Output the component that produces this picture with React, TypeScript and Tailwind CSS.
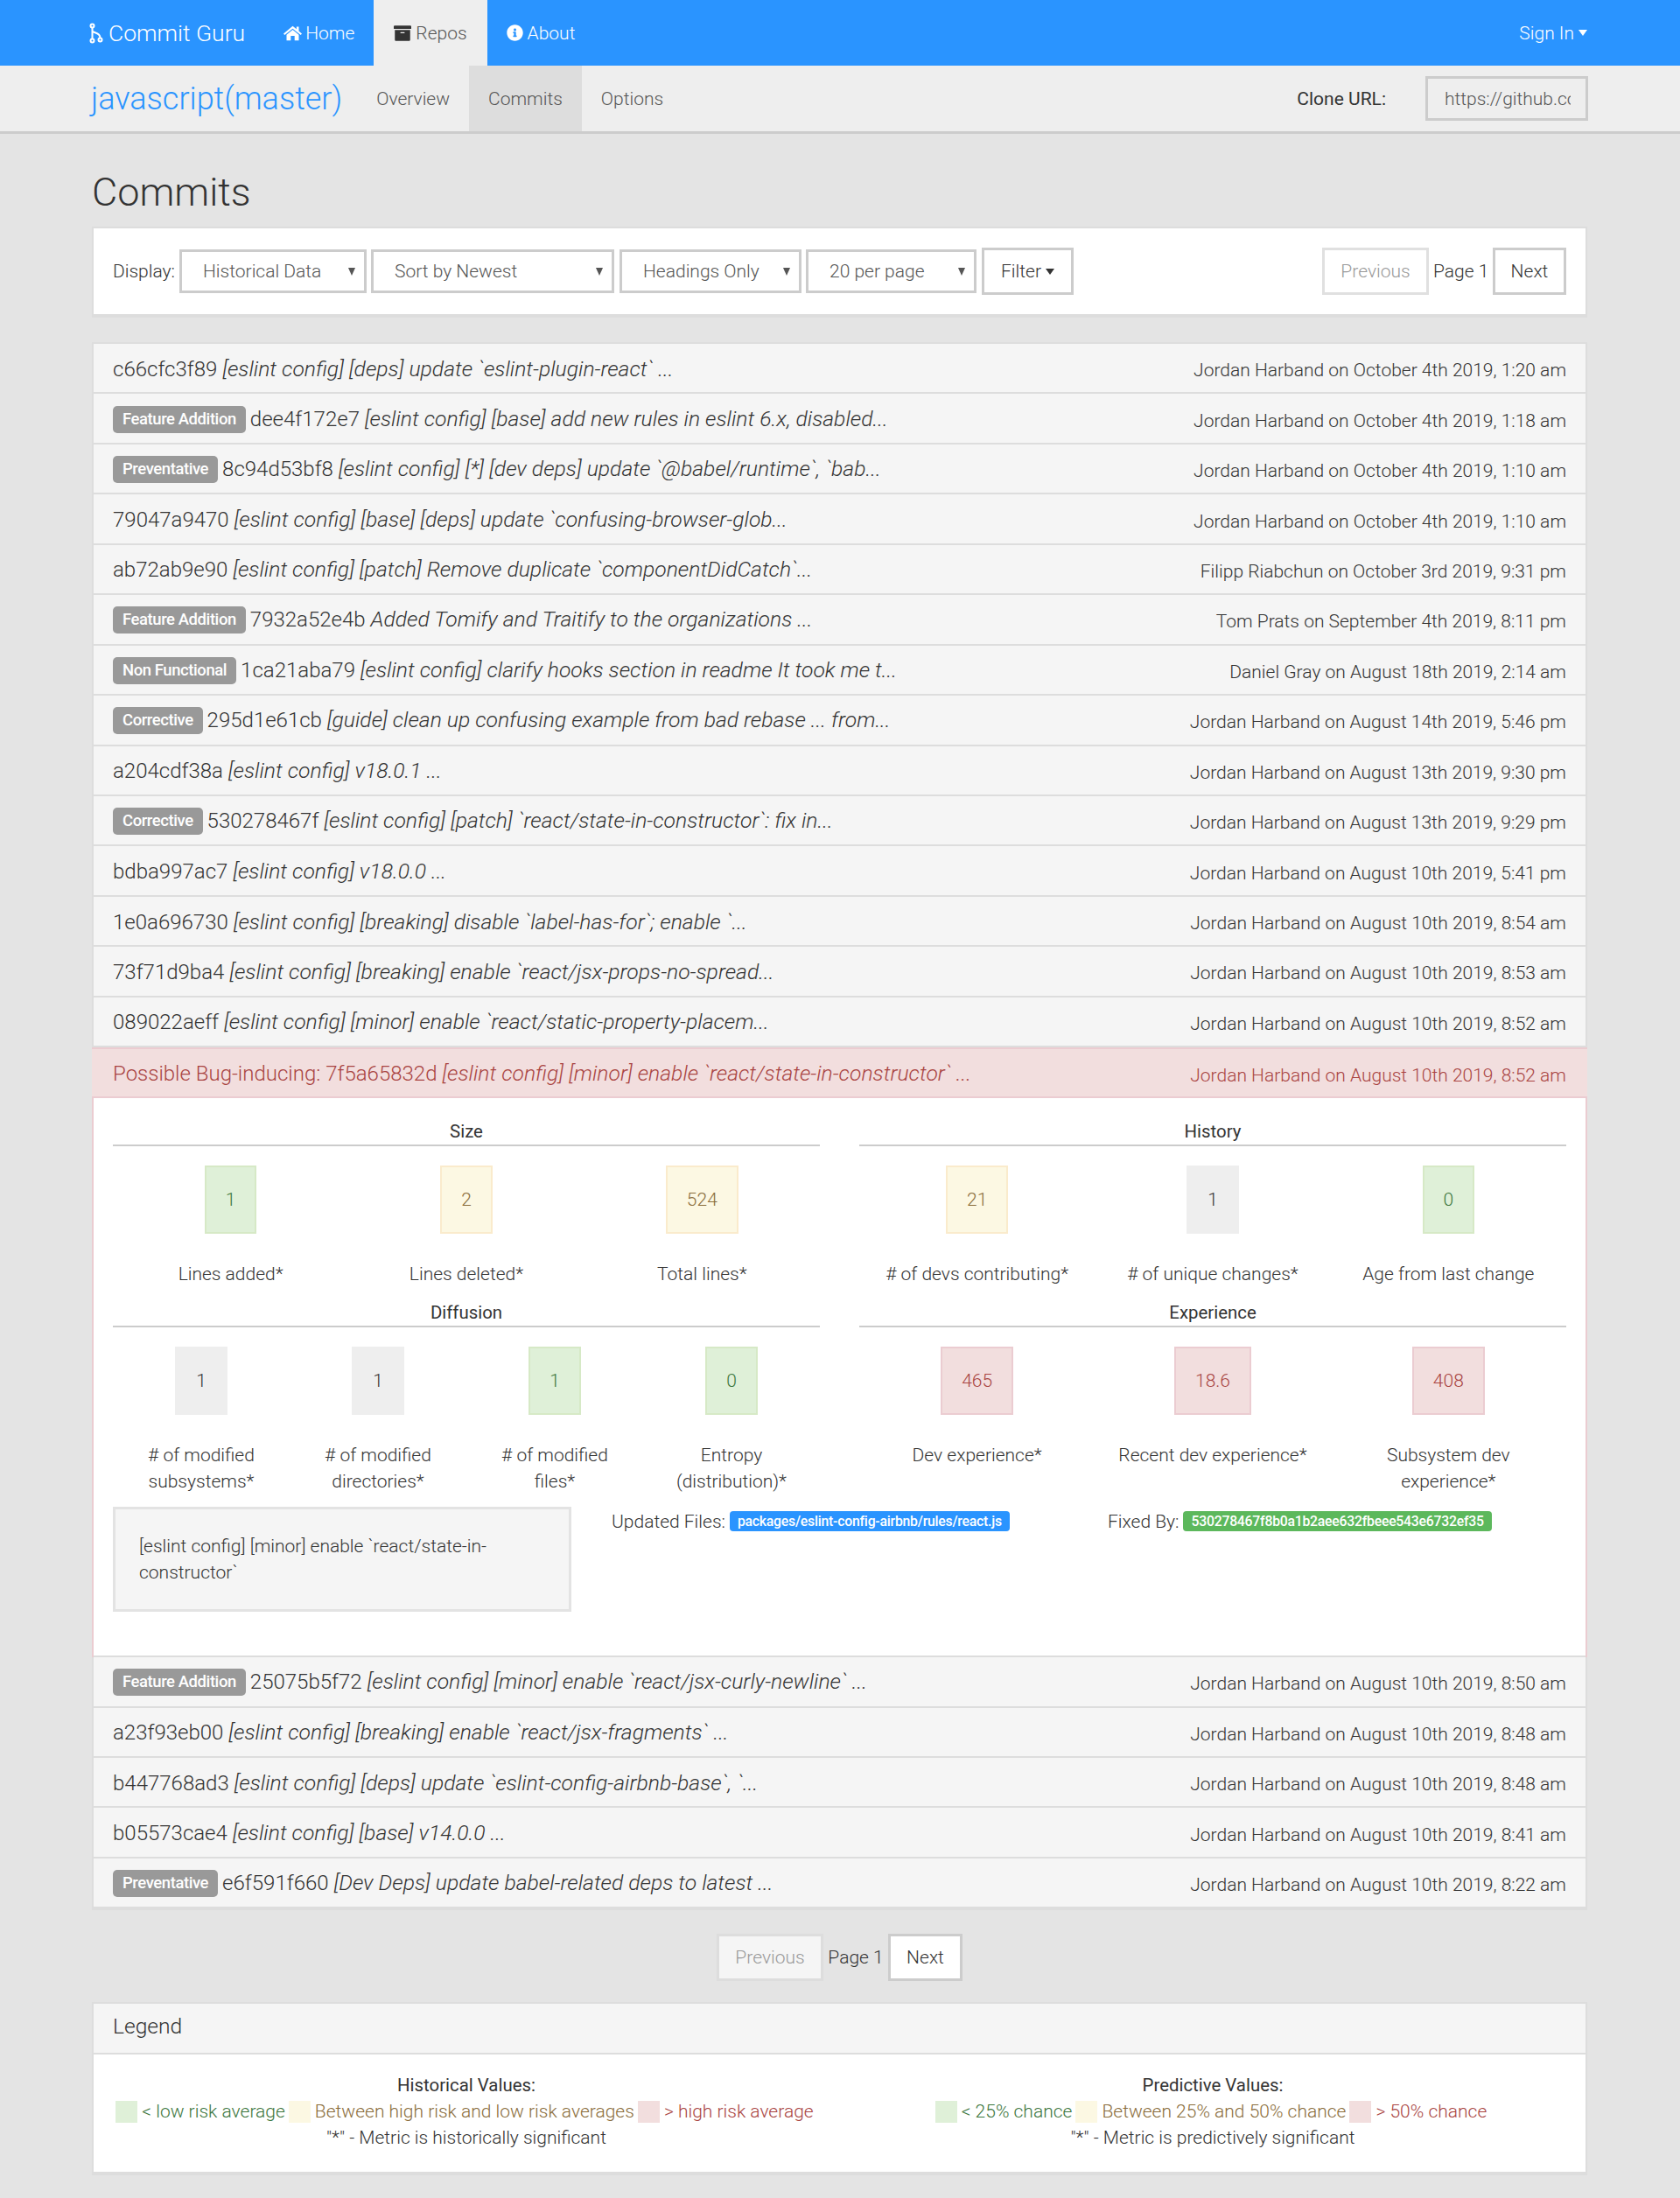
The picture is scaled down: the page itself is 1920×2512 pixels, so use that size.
import { FaArchive, FaInfoCircle } from 'react-icons/fa';

type Tone = 'success' | 'warning' | 'danger' | 'none';

const toneClass: Record<Tone, string> = {
  success: 'bg-[#dff0d8] border-[#d6e9c6] text-[#3c763d]',
  warning: 'bg-[#fcf8e3] border-[#faebcc] text-[#8a6d3b]',
  danger: 'bg-[#f2dede] border-[#ebccd1] text-[#a94442]',
  none: 'bg-[#eeeeee] border-[#eeeeee] text-[#333333]'
};

const legendText: Record<Tone, string> = {
  success: 'text-[#3c763d]',
  warning: 'text-[#8a6d3b]',
  danger: 'text-[#a94442]',
  none: 'text-[#333333]'
};

interface Commit {
  label?: string;
  hash: string;
  msg: string;
  meta: string;
}

const topCommits: Commit[] = [
  { hash: 'c66cfc3f89', msg: '[eslint config] [deps] update `eslint-plugin-react` ...', meta: 'Jordan Harband on October 4th 2019, 1:20 am' },
  { label: 'Feature Addition', hash: 'dee4f172e7', msg: '[eslint config] [base] add new rules in eslint 6.x, disabled...', meta: 'Jordan Harband on October 4th 2019, 1:18 am' },
  { label: 'Preventative', hash: '8c94d53bf8', msg: '[eslint config] [*] [dev deps] update `@babel/runtime`, `bab...', meta: 'Jordan Harband on October 4th 2019, 1:10 am' },
  { hash: '79047a9470', msg: '[eslint config] [base] [deps] update `confusing-browser-glob...', meta: 'Jordan Harband on October 4th 2019, 1:10 am' },
  { hash: 'ab72ab9e90', msg: '[eslint config] [patch] Remove duplicate `componentDidCatch`...', meta: 'Filipp Riabchun on October 3rd 2019, 9:31 pm' },
  { label: 'Feature Addition', hash: '7932a52e4b', msg: 'Added Tomify and Traitify to the organizations ...', meta: 'Tom Prats on September 4th 2019, 8:11 pm' },
  { label: 'Non Functional', hash: '1ca21aba79', msg: '[eslint config] clarify hooks section in readme It took me t...', meta: 'Daniel Gray on August 18th 2019, 2:14 am' },
  { label: 'Corrective', hash: '295d1e61cb', msg: '[guide] clean up confusing example from bad rebase ... from...', meta: 'Jordan Harband on August 14th 2019, 5:46 pm' },
  { hash: 'a204cdf38a', msg: '[eslint config] v18.0.1 ...', meta: 'Jordan Harband on August 13th 2019, 9:30 pm' },
  { label: 'Corrective', hash: '530278467f', msg: '[eslint config] [patch] `react/state-in-constructor`: fix in...', meta: 'Jordan Harband on August 13th 2019, 9:29 pm' },
  { hash: 'bdba997ac7', msg: '[eslint config] v18.0.0 ...', meta: 'Jordan Harband on August 10th 2019, 5:41 pm' },
  { hash: '1e0a696730', msg: '[eslint config] [breaking] disable `label-has-for`; enable `...', meta: 'Jordan Harband on August 10th 2019, 8:54 am' },
  { hash: '73f71d9ba4', msg: '[eslint config] [breaking] enable `react/jsx-props-no-spread...', meta: 'Jordan Harband on August 10th 2019, 8:53 am' },
  { hash: '089022aeff', msg: '[eslint config] [minor] enable `react/static-property-placem...', meta: 'Jordan Harband on August 10th 2019, 8:52 am' }
];

const bottomCommits: Commit[] = [
  { label: 'Feature Addition', hash: '25075b5f72', msg: '[eslint config] [minor] enable `react/jsx-curly-newline` ...', meta: 'Jordan Harband on August 10th 2019, 8:50 am' },
  { hash: 'a23f93eb00', msg: '[eslint config] [breaking] enable `react/jsx-fragments` ...', meta: 'Jordan Harband on August 10th 2019, 8:48 am' },
  { hash: 'b447768ad3', msg: '[eslint config] [deps] update `eslint-config-airbnb-base`, `...', meta: 'Jordan Harband on August 10th 2019, 8:48 am' },
  { hash: 'b05573cae4', msg: '[eslint config] [base] v14.0.0 ...', meta: 'Jordan Harband on August 10th 2019, 8:41 am' },
  { label: 'Preventative', hash: 'e6f591f660', msg: '[Dev Deps] update babel-related deps to latest ...', meta: 'Jordan Harband on August 10th 2019, 8:22 am' }
];

const Caret = () => (
  <span className="inline-block ml-[5px] align-middle w-0 h-0 border-x-[5.5px] border-x-transparent border-t-[7px] border-t-current" />
);

const BrandIcon = () => (
  <svg width="16" height="24" viewBox="0 0 16 24" fill="none" stroke="white" strokeWidth="2" className="mr-[6px]">
    <circle cx="3.5" cy="3.5" r="2" />
    <circle cx="3.5" cy="20.5" r="2" />
    <circle cx="12.5" cy="19.5" r="2" />
    <path d="M3.5 5.5V18.5M3.5 9.5C5 12 12.5 10.5 12.5 17.5" />
  </svg>
);

const HomeIcon = () => (
  <svg width="21" height="21" viewBox="0 0 24 24" fill="white" className="mr-[4px]">
    <path d="M12 3 0 13l1.5 1.8L12 6.5l10.5 8.3L24 13l-4-3.3V4h-3v3.2Z" />
    <path d="M4 14.5 12 8l8 6.5V22h-5.5v-6h-5v6H4Z" />
  </svg>
);

const Arrow = () => (
  <svg width="8" height="9" viewBox="0 0 8 9" className="absolute right-[13px] top-[21px] pointer-events-none">
    <path d="M0 0H8L4 9Z" fill="#555555" />
  </svg>
);

const Select = ({ text, width }: { text: string; width: string }) => (
  <div className={`relative ${width}`}>
    <select className="appearance-none w-full h-[50px] border-[3px] border-[#cccccc] bg-white pl-[24px] text-[#555555] font-light">
      <option>{text}</option>
    </select>
    <Arrow />
  </div>
);

const CommitRow = ({ commit }: { commit: Commit }) => (
  <div className="h-[57.45px] flex items-center justify-between px-[22px] bg-[#f5f5f5] border-b-2 border-[#dddddd]">
    <div className="text-[24px] pt-[2px] whitespace-nowrap">
      {commit.label && (
        <span className="inline-block align-[2px] bg-[#999999] text-white text-[18.45px] font-medium tracking-[-0.4px] rounded-[5px] px-[11px] leading-[31px] h-[31px] mr-[5px]">{commit.label}</span>
      )}
      {commit.hash} <i className="text-[24.7px]">{commit.msg}</i>
    </div>
    <div className="pt-[5px] whitespace-nowrap">{commit.meta}</div>
  </div>
);

const Metric = ({ value, label, tone }: { value: string; label: string; tone: Tone }) => (
  <div className="flex flex-col items-center text-center px-[22px]">
    <div className={`border-2 px-[22px] h-[78px] flex items-center ${toneClass[tone]}`}>{value}</div>
    <div className="mt-[31px] leading-[30px]">{label}</div>
  </div>
);

const Section = ({ title, children }: { title: string; children: React.ReactNode }) => (
  <div>
    <div className="text-center text-[20.4px] font-normal leading-[28px] border-b-2 border-[#cccccc] pb-[1px]">{title}</div>
    <div className="mt-[22px]">{children}</div>
  </div>
);

const Legend = ({ title, items, note }: { title: string; items: [string, Tone][]; note: string }) => (
  <div className="flex flex-col items-center">
    <div className="text-[20.4px] font-normal leading-[30px]">{title}</div>
    <div className="flex items-center h-[30px]">
      {items.map(([text, tone]) => (
        <div key={text} className={`flex items-center ${legendText[tone]}`}>
          <span className={`w-[25px] h-[25px] mr-[5px] ${toneClass[tone]}`} />
          <span className="mr-[4px]">{text}</span>
        </div>
      ))}
    </div>
    <div className="leading-[30px]">{note}</div>
  </div>
);

export default function App() {
  return (
    <div className="min-h-[2512px] bg-[#e4e4e4] text-[21px] font-light text-[#333333] leading-[30px] font-['Roboto',sans-serif]">
      {/* Top nav */}
      <div className="h-[75px] bg-[#2a94ff] text-white flex items-center pl-[102px] pr-[106px]">
        <div className="flex items-center text-[26.5px] mr-[21px]">
          <BrandIcon />
          Commit Guru
        </div>
        <a className="h-full flex items-center pl-[23px] pr-[22px]"><HomeIcon />Home</a>
        <a className="h-full flex items-center px-[23px] bg-[#eeeeee] text-[#555555]"><FaArchive className="mr-[5px] text-[#333333] text-[20px]" />Repos</a>
        <a className="h-full flex items-center px-[22px]"><FaInfoCircle className="mr-[5px] text-[19px]" />About</a>
        <a className="ml-auto flex items-center">Sign In<Caret /></a>
      </div>

      {/* Repo nav */}
      <div className="h-[78px] bg-[#eeeeee] border-b-[3px] border-[#cccccc] flex items-center pl-[104px] pr-[105px]">
        <div className="text-[36px] text-[#2a94ff] mr-[17px]">javascript(master)</div>
        <a className="h-full flex items-center px-[22px] text-[#555555]">Overview</a>
        <a className="h-full flex items-center px-[22px] text-[#555555] bg-[#dddddd]">Commits</a>
        <a className="h-full flex items-center px-[22px] text-[#555555]">Options</a>
        <div className="ml-auto font-normal mr-[45px]">Clone URL:</div>
        <input readOnly value="https://github.com/airbnb/javascript" className="w-[186px] h-[51px] border-[3px] border-[#cccccc] bg-[#eeeeee] pl-[19px] pr-[17px] text-[#555555] font-light" />
      </div>

      <div className="pl-[105px] pr-[106px] w-[1920px]">
        <h1 className="text-[45px] font-light leading-[50px] mt-[42px]">Commits</h1>

        {/* Filters */}
        <div className="mt-[14px] h-[104px] bg-white border-2 border-[#dddddd] border-b-[4px] flex items-center px-[22px]">
          <span className="w-[76px]">Display:</span>
          <Select text="Historical Data" width="w-[214px] mr-[5px]" />
          <Select text="Sort by Newest" width="w-[278px] mr-[6px]" />
          <Select text="Headings Only" width="w-[208px] mr-[5px]" />
          <Select text="20 per page" width="w-[195px] mr-[6px]" />
          <button className="h-[54px] w-[105px] border-[3px] border-[#cccccc] flex items-center justify-center">Filter<Caret /></button>
          <button className="ml-auto h-[54px] w-[122px] border-[3px] border-[#e0e0e0] text-[#999999]">Previous</button>
          <span className="mx-[5px] w-[63px] text-center whitespace-nowrap">Page 1</span>
          <button className="h-[54px] w-[84px] border-[3px] border-[#cccccc]">Next</button>
        </div>

        {/* Commit list */}
        <div className="mt-[28px] border-x-2 border-t-2 border-[#dddddd] bg-white">
          {topCommits.map((c) => <CommitRow key={c.hash} commit={c} />)}
        </div>

        {/* Expanded commit */}
        <div className="border-x-2 border-[#ebccd1] bg-white">
          <div className="h-[58px] -mx-[2px] flex items-center justify-between px-[24px] bg-[#f2dede] border-y-2 border-[#ebccd1] text-[#a94442]">
            <div className="text-[24px] pt-[2px] whitespace-nowrap">Possible Bug-inducing: 7f5a65832d <i className="text-[24.7px]">[eslint config] [minor] enable `react/state-in-constructor` ...</i></div>
            <div className="pt-[5px] whitespace-nowrap">Jordan Harband on August 10th 2019, 8:52 am</div>
          </div>
          <div className="h-[639px] px-[22px] pt-[23.5px] border-b-2 border-[#dddddd]">
            <div className="grid grid-cols-2 gap-x-[45px]">
              <Section title="Size">
                <div className="grid grid-cols-3 h-[154px]">
                  <Metric value="1" label="Lines added*" tone="success" />
                  <Metric value="2" label="Lines deleted*" tone="warning" />
                  <Metric value="524" label="Total lines*" tone="warning" />
                </div>
              </Section>
              <Section title="History">
                <div className="grid grid-cols-3 h-[154px]">
                  <Metric value="21" label="# of devs contributing*" tone="warning" />
                  <Metric value="1" label="# of unique changes*" tone="none" />
                  <Metric value="0" label="Age from last change" tone="success" />
                </div>
              </Section>
              <Section title="Diffusion">
                <div className="grid grid-cols-4 h-[183px]">
                  <Metric value="1" label="# of modified subsystems*" tone="none" />
                  <Metric value="1" label="# of modified directories*" tone="none" />
                  <Metric value="1" label="# of modified files*" tone="success" />
                  <Metric value="0" label="Entropy (distribution)*" tone="success" />
                </div>
              </Section>
              <Section title="Experience">
                <div className="grid grid-cols-3 h-[183px]">
                  <Metric value="465" label="Dev experience*" tone="danger" />
                  <Metric value="18.6" label="Recent dev experience*" tone="danger" />
                  <Metric value="408" label="Subsystem dev experience*" tone="danger" />
                </div>
              </Section>
            </div>
            <div className="flex items-start">
              <div className="w-[524px] h-[120px] bg-[#f5f5f5] border-[3px] border-[#e3e3e3] px-[27px] py-[27px] leading-[30px]">
                [eslint config] [minor] enable `react/state-in-constructor`
              </div>
              <div className="ml-[46px] mt-[2px] w-[567px] flex items-center">
                Updated Files:
                <span className="ml-[5px] bg-[#2a94ff] text-white text-[15.75px] font-medium tracking-[-0.22px] rounded-[4px] px-[9px] leading-[23px]">packages/eslint-config-airbnb/rules/react.js</span>
              </div>
              <div className="mt-[2px] flex items-center">
                Fixed By:
                <span className="ml-[5px] bg-[#5cb85c] text-white text-[15.75px] font-medium tracking-[-0.22px] rounded-[4px] px-[9px] leading-[23px]">530278467f8b0a1b2aee632fbeee543e6732ef35</span>
              </div>
            </div>
          </div>
        </div>

        <div className="border-x-2 border-b-[2px] border-[#dddddd] bg-white">
          {bottomCommits.map((c) => <CommitRow key={c.hash} commit={c} />)}
        </div>

        {/* Bottom pager */}
        <div className="mt-[27px] flex items-center justify-center">
          <button className="h-[54px] w-[122px] border-[3px] border-[#dddddd] text-[#999999] bg-[#f5f5f5]">Previous</button>
          <span className="w-[74px] text-center">Page 1</span>
          <button className="h-[54px] w-[85px] border-[3px] border-[#cccccc] bg-white">Next</button>
        </div>

        {/* Legend */}
        <div className="mt-[24px] border-2 border-[#dddddd] border-b-[4px] bg-white">
          <div className="h-[58px] bg-[#f5f5f5] border-b-2 border-[#dddddd] flex items-center px-[22px] pb-[4px] text-[24.6px]">Legend</div>
          <div className="h-[134px] px-[22px] pt-[20px] grid grid-cols-2 gap-x-[45px]">
            <Legend
              title="Historical Values:"
              items={[['< low risk average', 'success'], ['Between high risk and low risk averages', 'warning'], ['> high risk average', 'danger']]}
              note={'"*" - Metric is historically significant'}
            />
            <Legend
              title="Predictive Values:"
              items={[['< 25% chance', 'success'], ['Between 25% and 50% chance', 'warning'], ['> 50% chance', 'danger']]}
              note={'"*" - Metric is predictively significant'}
            />
          </div>
        </div>
      </div>
    </div>
  );
}
